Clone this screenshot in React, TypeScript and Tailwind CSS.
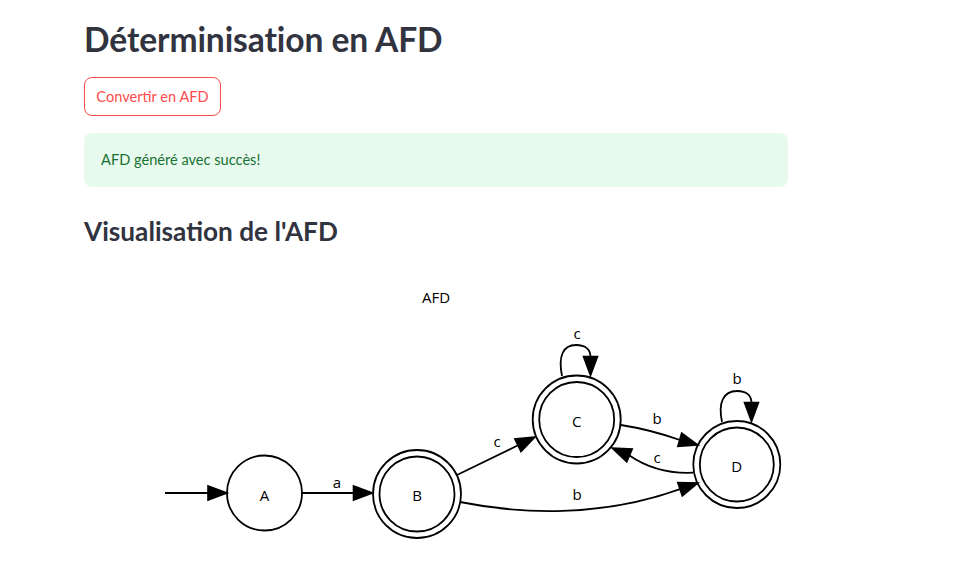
import React from "react";

function Arrow({ x, y, deg }: { x: number; y: number; deg: number }) {
  const a = (deg * Math.PI) / 180;
  const L = 19;
  const W = 7;
  const bx = x - L * Math.cos(a);
  const by = y - L * Math.sin(a);
  const px = -Math.sin(a) * W;
  const py = Math.cos(a) * W;
  const pts = `${x},${y} ${bx + px},${by + py} ${bx - px},${by - py}`;
  return <polygon points={pts} fill="#000" stroke="#000" strokeWidth={1.6} strokeLinejoin="miter" />;
}

function Label({ x, y, t }: { x: number; y: number; t: string }) {
  return (
    <text x={x} y={y} textAnchor="middle" dominantBaseline="central" fontSize={15} fill="#000">
      {t}
    </text>
  );
}

function Graph() {
  const sw = 1.8;
  return (
    <svg width={704} height={300} viewBox="84 270 704 300" style={{ fontFamily: '"Open Sans", "Noto Sans", sans-serif' }}>
      <Label x={436} y={297} t="AFD" />
      {/* start arrow */}
      <line x1={165} y1={493} x2={209} y2={493} stroke="#000" strokeWidth={sw} />
      <Arrow x={227} y={493} deg={0} />
      {/* A */}
      <circle cx={264.5} cy={493} r={37.5} fill="none" stroke="#000" strokeWidth={sw} />
      <Label x={264.5} y={495} t="A" />
      {/* A -> B */}
      <line x1={302} y1={493} x2={354} y2={493} stroke="#000" strokeWidth={sw} />
      <Arrow x={372.5} y={493} deg={0} />
      <Label x={337} y={482} t="a" />
      {/* B */}
      <circle cx={417} cy={494} r={44} fill="none" stroke="#000" strokeWidth={sw} />
      <circle cx={417} cy={494} r={37.5} fill="none" stroke="#000" strokeWidth={sw} />
      <Label x={417} y={495} t="B" />
      {/* C */}
      <circle cx={576.7} cy={419.5} r={44} fill="none" stroke="#000" strokeWidth={sw} />
      <circle cx={576.7} cy={419.5} r={37.5} fill="none" stroke="#000" strokeWidth={sw} />
      <Label x={576.7} y={420.5} t="C" />
      {/* D */}
      <circle cx={736.8} cy={464.5} r={43.5} fill="none" stroke="#000" strokeWidth={sw} />
      <circle cx={736.8} cy={464.5} r={37} fill="none" stroke="#000" strokeWidth={sw} />
      <Label x={736.8} y={466} t="D" />
      {/* B -> C */}
      <line x1={457} y1={475} x2={518} y2={445.3} stroke="#000" strokeWidth={sw} />
      <Arrow x={535} y={437} deg={-26} />
      <Label x={497} y={441} t="c" />
      {/* C -> D */}
      <path d="M621 425 C 640 428, 660 433, 680 440" fill="none" stroke="#000" strokeWidth={sw} />
      <Arrow x={698} y={445} deg={16} />
      <Label x={657} y={418} t="b" />
      {/* D -> C */}
      <path d="M693 472.7 C 675 473.5, 652 471, 629.5 455.5" fill="none" stroke="#000" strokeWidth={sw} />
      <Arrow x={612} y={448} deg={-157} />
      <Label x={657} y={457} t="c" />
      {/* B -> D */}
      <path d="M460 502 C 520 514, 600 518, 680 489.2" fill="none" stroke="#000" strokeWidth={sw} />
      <Arrow x={698} y={483} deg={-19} />
      <Label x={577} y={494} t="b" />
      {/* loop C */}
      <path d="M562 376 C 558 356, 563 345, 576 345 C 586 345, 590.5 350, 590.5 357" fill="none" stroke="#000" strokeWidth={sw} />
      <Arrow x={590.5} y={375.5} deg={90} />
      <Label x={577} y={333} t="c" />
      {/* loop D */}
      <path d="M722 422 C 718 403, 723 391, 737 391 C 747 391, 751.5 396, 751.5 403" fill="none" stroke="#000" strokeWidth={sw} />
      <Arrow x={751.5} y={421.5} deg={90} />
      <Label x={737} y={378} t="b" />
    </svg>
  );
}

export default function App() {
  return (
    <div
      className="min-h-[579px] w-full bg-white pl-[84px] pt-[19px] text-[#31333f]"
      style={{ fontFamily: 'Lato, "Noto Sans", sans-serif' }}
    >
      <div className="w-[704px]">
        <h1 className="h-[40px] text-[33.6px] font-bold leading-[40px] tracking-[-0.1px]">Déterminisation en AFD</h1>
        <button className="mt-[18px] flex h-[39px] w-[137px] items-center justify-center rounded-[8px] border border-[#ff4b4b] bg-white text-[14.6px] text-[#ff4b4b]">
          Convertir en AFD
        </button>
        <div className="mt-[17px] flex h-[54px] items-center rounded-[8px] bg-[#e8f9ee] px-[17px] text-[14.6px] text-[#177233]">
          AFD généré avec succès!
        </div>
        <h2 className="mt-[28px] h-[32px] text-[26.2px] font-bold leading-[32px]">Visualisation de l'AFD</h2>
        <div className="mt-[23px]">
          <Graph />
        </div>
      </div>
    </div>
  );
}
